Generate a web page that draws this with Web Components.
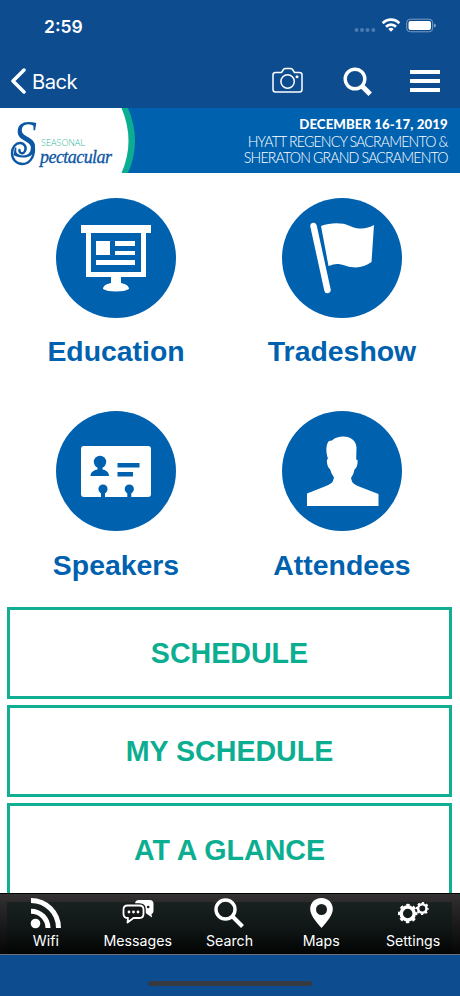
<!DOCTYPE html>
<html lang="en">
<head>
<meta charset="utf-8">
<title>Seasonal Spectacular</title>
<style>
  html, body { margin: 0; height: 100%; }
  body { background: #fff; font-family: Inter, Roboto, sans-serif; overflow: hidden; }
</style>
</head>
<body>
<event-app>
  <status-bar slot="top" time="2:59"></status-bar>
  <nav-bar slot="top">Back</nav-bar>
  <event-banner slot="top">
    <span slot="date">DECEMBER 16-17, 2019</span>
    <span slot="venue1">HYATT REGENCY SACRAMENTO &amp;</span>
    <span slot="venue2">SHERATON GRAND SACRAMENTO</span>
  </event-banner>
  <icon-tile icon="education">Education</icon-tile>
  <icon-tile icon="tradeshow">Tradeshow</icon-tile>
  <icon-tile icon="speakers">Speakers</icon-tile>
  <icon-tile icon="attendees">Attendees</icon-tile>
  <menu-button slot="buttons">SCHEDULE</menu-button>
  <menu-button slot="buttons">MY SCHEDULE</menu-button>
  <menu-button slot="buttons">AT A GLANCE</menu-button>
  <tab-bar slot="bottom">
    <tab-item icon="wifi">Wifi</tab-item>
    <tab-item icon="messages">Messages</tab-item>
    <tab-item icon="search">Search</tab-item>
    <tab-item icon="maps">Maps</tab-item>
    <tab-item icon="settings">Settings</tab-item>
  </tab-bar>
</event-app>

<script>
const tileIcons = {
  education: `
    <path fill="#fff" d="M25 27h70v8H25zM30 34h60v45H30z"/>
    <path fill="#0061af" d="M35 35h50v39H35z"/>
    <path fill="#fff" d="M40 43h14v14H40zM59 43h20v5H59zM59 53h20v4H59zM40 62h39v5H40zM55 79h10v6c5 1 8 3 8 6q-4 2.500-13 2.500T47 91c0-3 3-5 8-6z"/>`,
  tradeshow: `
    <path stroke="#fff" stroke-width="6.500" stroke-linecap="round" d="M31.500 28 45.500 92"/>
    <path fill="#fff" d="M39 28c9-3 20-4 29 0s17 3 24-1l-2.500 37c-7 5-15 7-25 4s-11-2-18 0z"/>`,
  speakers: `
    <rect x="25" y="35" width="70" height="51" rx="3" fill="#fff"/>
    <g fill="#0061af">
      <circle cx="44" cy="51" r="6.200"/>
      <path d="M41.500 55h5v3.500c4 .8 6.500 3 6.500 6.500H34.500c0-3.500 3-5.700 7-6.500zM61.500 52h22v4.500h-22zM61.500 61H77v4.500H61.500z"/>
      <circle cx="47" cy="78" r="4.600"/><path d="M45 80h4v7h-4z"/>
      <circle cx="73.300" cy="78" r="4.600"/><path d="M71.300 80h4v7h-4z"/>
    </g>`,
  attendees: `
    <path fill="#fff" d="M25 95V82.500l19-7.500q6-2.500 7-5l1-3.500q-3-4-4-8.500c-2-1-3.500-6-3-9.500l1-.5c-2.500-8-2-15 1-18l3-.5c3-3 7-4 11-4 8 0 13 4 13.500 11l-.3 12 1.300.5c.5 4-.8 8-3 9.500q-.5 4-3.500 8.500l1 3.500q1 2.500 7 5l19.500 7.500V95z"/>`
};

// one gear, drawn as a dashed ring of teeth over a solid ring
function gear(cx, cy, r, w) {
  const c = 2 * Math.PI * (r + w / 2);
  const tooth = c / 16;
  return `<circle cx="${cx}" cy="${cy}" r="${r}" fill="none" stroke="#fff" stroke-width="${w}"/>
    <circle cx="${cx}" cy="${cy}" r="${r + w / 2}" fill="none" stroke="#fff" stroke-width="${w * 0.85}" stroke-dasharray="${tooth}" stroke-dashoffset="${tooth / 2}"/>`;
}

const tabIcons = {
  wifi: `
    <circle cx="5.500" cy="26.500" r="4.800" fill="#fff"/>
    <path fill="none" stroke="#fff" stroke-width="5" d="M1 14.200A17 17 0 0 1 18 31M1 3.500A27.500 27.500 0 0 1 28.500 31"/>`,
  messages: `
    <path fill="#fff" d="M17 3h10.500q4 0 4 4v6q0 3.500-2 4l.5 3.500-5-3.500-12-10q0-4 4-4z"/>
    <path fill="#151817" stroke="#151817" stroke-width="4.500" d="M5.500 8.500h12q4 0 4 4v4.500q0 4-4 4h-6l-6 4 .5-4q-4.500 0-4.500-4v-4.500q0-4 4-4z"/>
    <path fill="#151817" stroke="#fff" stroke-width="1.800" stroke-linejoin="round" d="M5.500 8.500h12q4 0 4 4v4.500q0 4-4 4h-6l-6 4.500.5-4.500q-4.500 0-4.500-4v-4.500q0-4 4-4z"/>
    <g fill="#fff"><circle cx="7" cy="15" r="1.400"/><circle cx="11.500" cy="15" r="1.400"/><circle cx="16" cy="15" r="1.400"/></g>
    <circle cx="26.200" cy="10" r="1.300" fill="#151817"/>`,
  search: `
    <circle cx="12.500" cy="12.500" r="9.500" fill="none" stroke="#fff" stroke-width="3.400"/>
    <path stroke="#fff" stroke-width="4" d="m19 19 10.500 10.500"/>`,
  maps: `
    <path fill="#fff" fill-rule="evenodd" d="M16.500 1C9.500 1 5.200 6 5.200 12c0 6 5.300 12 11.300 19 6-7 11.300-13 11.300-19C27.800 6 23.500 1 16.500 1zm0 6a5.500 5.500 0 1 1 0 11 5.500 5.500 0 0 1 0-11z"/>`,
  settings: gear(10.700, 16.500, 6.500, 3.5) + gear(25.300, 11.500, 4.2, 2.500)
};

class EventApp extends HTMLElement {
  connectedCallback() {
    this.attachShadow({ mode: 'open' });
    this.shadowRoot.innerHTML = `
      <style>
        :host {
          display: flex;
          flex-direction: column;
          height: 996px;
          width: 460px;
          overflow: hidden;
        }
        header, footer { flex: none; }
        main { flex: 1; min-height: 0; overflow: hidden; }
        .tiles {
          display: grid;
          grid-template-columns: 226px 226px;
          grid-auto-rows: 213.800px;
          padding: 25px 3px 0;
        }
        .buttons {
          display: flex;
          flex-direction: column;
          gap: 6.200px;
          padding: 0 8px 0 7px;
          margin-top: -18.600px;
        }
      </style>
      <header><slot name="top"></slot></header>
      <main>
        <div class="tiles"><slot></slot></div>
        <div class="buttons"><slot name="buttons"></slot></div>
      </main>
      <footer><slot name="bottom"></slot></footer>
    `;
  }
}
customElements.define('event-app', EventApp);

class StatusBar extends HTMLElement {
  connectedCallback() {
    this.attachShadow({ mode: 'open' });
    this.shadowRoot.innerHTML = `
      <style>
        :host {
          display: flex;
          justify-content: space-between;
          align-items: center;
          height: 52px;
          box-sizing: border-box;
          padding: 0 24px 0 44px;
          background: #0c4c8f;
          color: #fff;
          font-size: 17.500px;
          font-weight: 600;
        }
        svg { display: block; }
      </style>
      <span>${this.getAttribute('time')}</span>
      <svg width="82" height="18" viewBox="0 0 82 18">
        <g fill="#4a7bb1">
          <circle cx="2.500" cy="13" r="2"/><circle cx="8" cy="13" r="2"/>
          <circle cx="13.500" cy="13" r="2"/><circle cx="19.300" cy="13" r="2"/>
        </g>
        <g fill="none" stroke="#fff" stroke-width="2.700">
          <path d="M28.700 6.200a11.500 11.500 0 0 1 16.600 0M32 9.700a7 7 0 0 1 10 0"/>
        </g>
        <path fill="#fff" d="m37 14.800-2.700-2.900a4 4 0 0 1 5.400 0z"/>
        <rect x="52.700" y="2.200" width="26" height="12.600" rx="3.600" fill="none" stroke="#7c9fc7"/>
        <rect x="54.500" y="4" width="22.500" height="9" rx="2" fill="#fff"/>
        <path fill="#7c9fc7" d="M80 6.500q2 .6 2 2t-2 2z"/>
      </svg>
    `;
  }
}
customElements.define('status-bar', StatusBar);

class NavBar extends HTMLElement {
  connectedCallback() {
    this.attachShadow({ mode: 'open' });
    this.shadowRoot.innerHTML = `
      <style>
        :host {
          display: flex;
          justify-content: space-between;
          align-items: center;
          height: 56px;
          box-sizing: border-box;
          padding: 2px 20px 0 10px;
          background: #0c4c8f;
          color: #fff;
        }
        .back {
          display: flex;
          align-items: center;
          gap: 6px;
          font-size: 20.200px;
          letter-spacing: -0.500px;
        }
        .actions { display: flex; align-items: center; gap: 38px; }
        svg { display: block; fill: none; stroke: #fff; }
      </style>
      <div class="back">
        <svg width="16" height="28" viewBox="0 0 16 28" stroke-width="3.500" stroke-linecap="round" stroke-linejoin="round"><path d="M14 3 3 14l11 11"/></svg>
        <slot></slot>
      </div>
      <div class="actions">
        <svg width="33" height="28" viewBox="0 0 33 28" stroke-width="1.500" stroke-linejoin="round">
          <path d="M3.500 5.500h6l2-3q.7-.9 2-.9h5q1.300 0 2 .9l2 3h5q2.500 0 2.500 2.500v14.500q0 2.500-2.500 2.500h-24Q1 25 1 22.500V8q0-2.500 2.500-2.500z"/>
          <circle cx="15.600" cy="14.500" r="6.700"/>
          <circle cx="25" cy="9.800" r="1.500" fill="#fff" stroke="none"/>
        </svg>
        <svg width="29" height="29" viewBox="0 0 29 29">
          <circle cx="12" cy="12" r="9.800" stroke-width="3.400"/>
          <path d="m18.500 18.500 8.700 8.700" stroke-width="5"/>
        </svg>
        <svg width="30" height="24" viewBox="0 0 30 24" stroke-width="4"><path d="M0 3h30M0 12h30M0 21h30"/></svg>
      </div>
    `;
  }
}
customElements.define('nav-bar', NavBar);

class EventBanner extends HTMLElement {
  connectedCallback() {
    this.attachShadow({ mode: 'open' });
    this.shadowRoot.innerHTML = `
      <style>
        :host {
          display: flex;
          justify-content: space-between;
          height: 64.500px;
          background: #0061af;
          color: #fff;
          font-family: Lato, sans-serif;
        }
        svg { display: block; }
        .info {
          display: flex;
          flex-direction: column;
          align-items: flex-end;
          padding: 8px 12px 0 0;
          line-height: 16.500px;
          white-space: nowrap;
          font-size: 15px;
          font-weight: 300;
          letter-spacing: -0.900px;
          transform: scaleX(0.945);
          transform-origin: calc(100% - 12px) 0;
        }
        .date { font-size: 14px; font-weight: 900; letter-spacing: 0.070px; }
      </style>
      <svg width="140" height="65" viewBox="0 0 140 65">
        <path fill="#0cae91" d="M0 0h128q14 33 0 65H0z"/>
        <path fill="#fff" d="M0 0h121.500q14 33 0 65H0z"/>
        <text x="13" y="49" font-family="Liberation Serif, serif" font-style="italic" font-size="52" fill="#0b57a4" textLength="24" lengthAdjust="spacingAndGlyphs">S</text>
        <path fill="none" stroke="#0b57a4" stroke-width="2.400" stroke-linecap="round" d="M34 41c0 9-5 15-11.500 15C16 56 12 51 12 45s4-10 8-10 7 4 5 8-6 2-5.500-1"/>
        <text x="41" y="38" font-family="Open Sans, sans-serif" font-weight="300" font-size="9.500" fill="#35b89c" textLength="44" lengthAdjust="spacingAndGlyphs">SEASONAL</text>
        <text x="40" y="54.500" font-family="Liberation Serif, serif" font-style="italic" font-size="18" fill="#0b57a4" stroke="#0b57a4" stroke-width="0.300" textLength="72">pectacular</text>
      </svg>
      <div class="info">
        <div class="date"><slot name="date"></slot></div>
        <slot name="venue1"></slot>
        <slot name="venue2"></slot>
      </div>
    `;
  }
}
customElements.define('event-banner', EventBanner);

class IconTile extends HTMLElement {
  connectedCallback() {
    this.attachShadow({ mode: 'open' });
    this.shadowRoot.innerHTML = `
      <style>
        :host {
          display: flex;
          flex-direction: column;
          align-items: center;
          color: #0061af;
          font: bold 28.400px/34px "Liberation Sans", sans-serif;
        }
        .icon {
          width: 120px;
          height: 120px;
          border-radius: 50%;
          background: #0061af;
          margin-bottom: 16.500px;
        }
        svg { display: block; }
      </style>
      <div class="icon"><svg width="120" height="120" viewBox="0 0 120 120">${tileIcons[this.getAttribute('icon')]}</svg></div>
      <div><slot></slot></div>
    `;
  }
}
customElements.define('icon-tile', IconTile);

class MenuButton extends HTMLElement {
  connectedCallback() {
    this.attachShadow({ mode: 'open' });
    this.shadowRoot.innerHTML = `
      <style>
        :host {
          display: flex;
          flex: none;
          justify-content: center;
          align-items: center;
          box-sizing: border-box;
          height: 92.300px;
          border: 3px solid #12ae93;
          color: #0cae91;
          font: bold 28.600px/34px "Liberation Sans", sans-serif;
        }
      </style>
      <div><slot></slot></div>
    `;
  }
}
customElements.define('menu-button', MenuButton);

class TabBar extends HTMLElement {
  connectedCallback() {
    this.attachShadow({ mode: 'open' });
    this.shadowRoot.innerHTML = `
      <style>
        :host { display: block; background: #0c4c8f; }
        .tabs {
          display: grid;
          grid-template-columns: repeat(5, 91.800px);
          height: 62px;
          box-sizing: border-box;
          border-top: 1px solid #000;
          border-bottom: 1px solid #68717b;
          background:
            linear-gradient(#192221, #101716 25px, #030404) 7px 8px / 445px 52px no-repeat,
            linear-gradient(#343133, #2a292a 10px, #050505);
        }
        .home {
          display: flex;
          justify-content: center;
          padding-top: 26px;
          height: 15px;
        }
        .home div { width: 164px; height: 5px; border-radius: 3px; background: #36393f; }
      </style>
      <div class="tabs"><slot></slot></div>
      <div class="home"><div></div></div>
    `;
  }
}
customElements.define('tab-bar', TabBar);

class TabItem extends HTMLElement {
  connectedCallback() {
    this.attachShadow({ mode: 'open' });
    this.shadowRoot.innerHTML = `
      <style>
        :host {
          display: flex;
          flex-direction: column;
          align-items: center;
          padding-top: 3px;
          color: #fff;
          font-size: 14.200px;
          line-height: 20px;
        }
        svg { display: block; margin-bottom: 2px; }
      </style>
      <svg width="32" height="32" viewBox="0 0 32 32">${tabIcons[this.getAttribute('icon')]}</svg>
      <div><slot></slot></div>
    `;
  }
}
customElements.define('tab-item', TabItem);
</script>
</body>
</html>
